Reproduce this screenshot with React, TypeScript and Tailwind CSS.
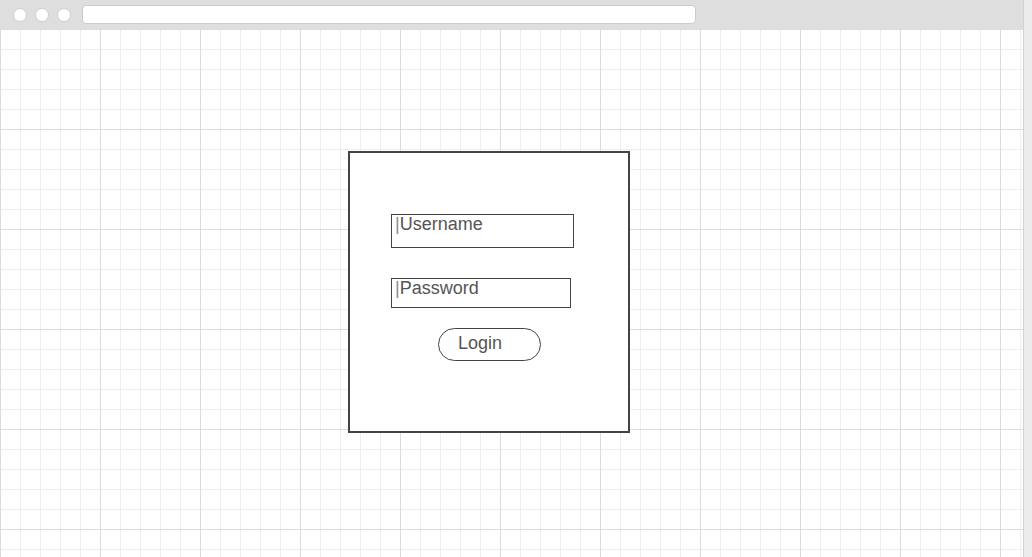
export default function App() {
  return (
    <div className="flex w-[1032px] h-[557px] overflow-hidden bg-[#ececec]" style={{ fontFamily: '"Liberation Sans", Arial, sans-serif' }}>
      <div className="flex flex-col w-[1024px] h-full border-r border-[#d2d2d2]">
        {/* window chrome */}
        <div className="flex items-center h-[29px] shrink-0 bg-[#dedede] pl-[13px]">
          <div className="flex gap-[8px]">
            <span className="w-[14px] h-[14px] rounded-full bg-white border border-[#cfcfcf]" />
            <span className="w-[14px] h-[14px] rounded-full bg-white border border-[#cfcfcf]" />
            <span className="w-[14px] h-[14px] rounded-full bg-white border border-[#cfcfcf]" />
          </div>
          <div className="ml-[11px] w-[614px] h-[19px] rounded-[4px] bg-white border border-[#cccccc]" />
        </div>

        {/* grid canvas */}
        <div className="flex-1 pt-[122px] pl-[348px] bg-white [background-image:linear-gradient(to_right,#dcdcdc_1px,transparent_1px),linear-gradient(to_bottom,#dcdcdc_1px,transparent_1px),linear-gradient(to_right,#eeeeee_1px,transparent_1px),linear-gradient(to_bottom,#eeeeee_1px,transparent_1px)] [background-size:100px_100px,100px_100px,20px_20px,20px_20px]">
          <div className="w-[282px] h-[282px] bg-white border-2 border-[#444444] pt-[61px] pl-[41px]">
            <div className="w-[183px] h-[34px] border border-[#444444] bg-white pl-[3px] text-[18px] leading-none text-[#555555]">
              <span className="text-[#8a8a8a]">|</span>Username
            </div>
            <div className="mt-[30px] w-[180px] h-[30px] border border-[#444444] bg-white pl-[3px] text-[18px] leading-none text-[#555555]">
              <span className="text-[#8a8a8a]">|</span>Password
            </div>
            <button className="block mt-[20px] ml-[47px] w-[103px] h-[33px] rounded-full border border-[#444444] bg-white pl-[19px] pb-[3px] text-left text-[18px] leading-none text-[#555555]">
              Login
            </button>
          </div>
        </div>
      </div>
    </div>
  );
}
